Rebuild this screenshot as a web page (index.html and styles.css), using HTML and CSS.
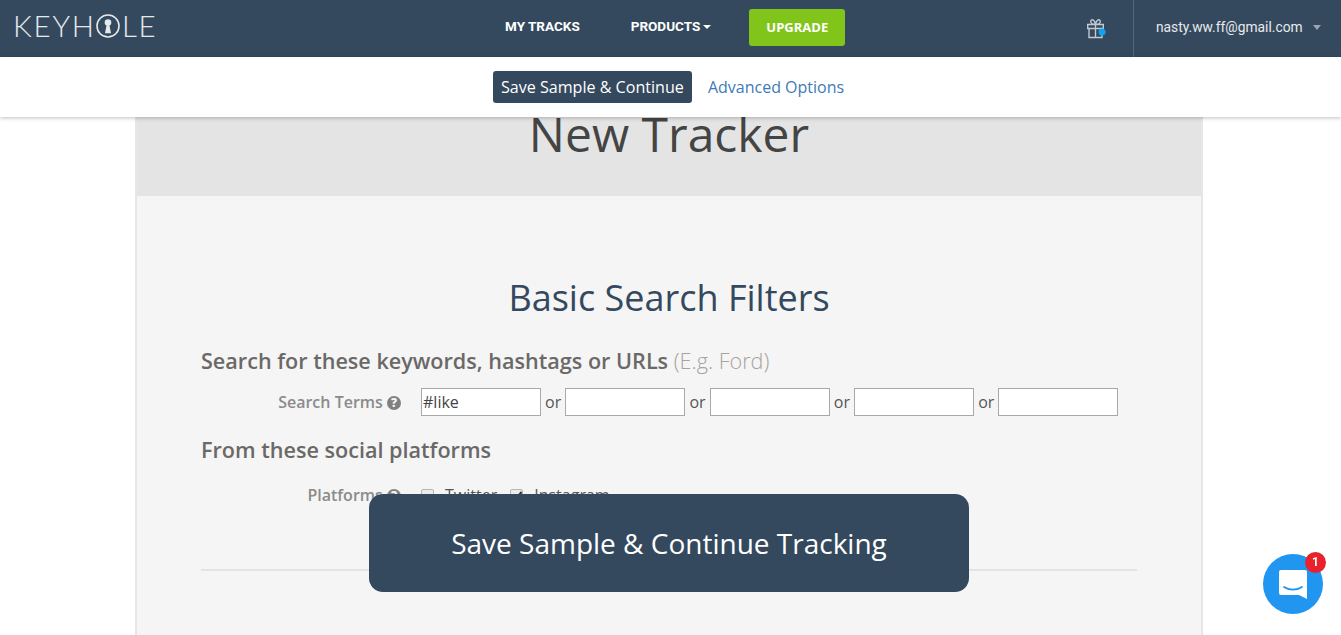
FILE: index.html
```html
<!DOCTYPE html>
<html lang="en">
<head>
  <meta charset="UTF-8">
  <meta name="viewport" content="width=device-width, initial-scale=1.0">
  <title>New Tracker</title>
  <link rel="stylesheet" href="styles.css">
</head>
<body>
  <!-- Top navigation -->
  <header class="topbar">
    <a class="logo" href="#">KEYH<svg class="logo-o" width="24" height="24" viewBox="0 0 24 24"><circle cx="12" cy="12" r="11" fill="none" stroke="#e6e9ec" stroke-width="1.6"/><circle cx="12" cy="8.500" r="3.300" fill="#e6e9ec"/><path d="M10.800 10h2.400l1.800 9.200H9z" fill="#e6e9ec"/></svg>LE</a>
    <nav class="topnav">
      <a class="topnav-link" href="#">MY TRACKS</a>
      <a class="topnav-link" href="#">PRODUCTS<span class="caret"></span></a>
      <a class="upgrade" href="#">UPGRADE</a>
    </nav>
    <div class="gift">
      <svg width="20" height="21" viewBox="0 0 20 21" fill="none" stroke="#c3c9d0" stroke-width="1.400">
        <path d="M1.700 6.500h15.600v4H1.700zM3 10.500h13v9H3zM9.500 6.500v13"/>
        <path d="M9.500 6.500C6 6.500 4.300 5 4.800 3 5.500.8 8.500 1.200 9.500 6.500zM9.500 6.500c3.500 0 5.200-1.500 4.700-3.500C13.500.8 10.500 1.200 9.500 6.500z"/>
        <circle cx="16" cy="14" r="3.500" fill="#0ea5ee" stroke="none"/>
      </svg>
    </div>
    <div class="account">nasty.ww.ff@gmail.com<span class="account-caret"></span></div>
  </header>

  <!-- Action bar under the nav -->
  <div class="actionbar">
    <a class="save-small" href="#">Save Sample &amp; Continue</a>
    <a class="advanced" href="#">Advanced Options</a>
  </div>

  <main class="card">
    <div class="card-head">
      <h1>New Tracker</h1>
    </div>
    <div class="card-body">
      <h2>Basic Search Filters</h2>
      <h3>Search for these keywords, hashtags or URLs <span class="hint">(E.g. Ford)</span></h3>
      <div class="field-row">
        <label class="field-label">Search Terms <span class="help">?</span></label>
        <div class="terms">
          <input type="text" value="#like"><span>or</span>
          <input type="text"><span>or</span>
          <input type="text"><span>or</span>
          <input type="text"><span>or</span>
          <input type="text">
        </div>
      </div>
      <h3 class="platforms-title">From these social platforms</h3>
      <div class="field-row platforms-row">
        <label class="field-label">Platforms <span class="help">?</span></label>
        <div class="platforms">
          <input type="checkbox" id="twitter"><label for="twitter">Twitter</label>
          <input type="checkbox" id="instagram" checked><label for="instagram">Instagram</label>
        </div>
      </div>
      <hr class="divider">
    </div>
  </main>

  <!-- Floating button -->
  <a class="save-big" href="#">Save Sample &amp; Continue Tracking</a>

  <!-- Chat launcher -->
  <div class="chat">
    <svg width="30" height="32" viewBox="0 0 30 32">
      <path d="M3 1h24a2 2 0 0 1 2 2v27l-8-4H3a2 2 0 0 1-2-2V3a2 2 0 0 1 2-2z" fill="#fff"/>
      <path d="M6 18c5 3.500 13 3.500 18 0" fill="none" stroke="#2196f0" stroke-width="1.800" stroke-linecap="round"/>
    </svg>
    <span class="chat-badge">1</span>
  </div>
</body>
</html>
```

FILE: styles.css
```css
html, body {
  margin: 0;
  height: 635px;
  overflow: hidden;
}

body {
  font-family: "Open Sans", sans-serif;
  background-color: #fff;
  color: #6b6967;
}

a {
  text-decoration: none;
}

/* Top navigation */
.topbar {
  display: flex;
  align-items: center;
  height: 57px;
  background-color: #34495e;
  position: relative;
}

.logo {
  display: flex;
  align-items: center;
  margin-left: 13px;
  font-family: "Lato", sans-serif;
  font-weight: 300;
  font-size: 29.500px;
  letter-spacing: 1.800px;
  color: #e6e9ec;
  line-height: 26px;
  margin-top: -6px;
}

.logo-o {
  margin: 0 2px 0 0;
}

.topnav {
  position: absolute;
  left: 505px;
  top: 9px;
  display: flex;
  align-items: center;
}

.topnav-link {
  font-family: "Roboto", sans-serif;
  font-weight: 700;
  font-size: 13.500px;
  color: #fff;
  margin-right: 51px;
  margin-top: -4px;
}

.caret {
  display: inline-block;
  margin-left: 3px;
  vertical-align: 2px;
  border-left: 4.500px solid transparent;
  border-right: 4.500px solid transparent;
  border-top: 4.500px solid #fff;
}

.upgrade {
  display: block;
  width: 96px;
  height: 37px;
  line-height: 37px;
  text-align: center;
  background-color: #82c51a;
  border-radius: 3px;
  color: #fff;
  font-weight: 700;
  font-size: 13px;
  margin-left: -13px;
}

.gift {
  position: absolute;
  left: 1086px;
  top: 18px;
  line-height: 0;
}

.account {
  position: absolute;
  left: 1133px;
  top: 0;
  height: 57px;
  width: 208px;
  box-sizing: border-box;
  border-left: 1px solid #53657a;
  padding-left: 22px;
  line-height: 55px;
  font-family: "Roboto", sans-serif;
  font-size: 13.800px;
  color: #e8eaed;
}

.account-caret {
  display: inline-block;
  margin-left: 10px;
  vertical-align: 2px;
  border-left: 4.500px solid transparent;
  border-right: 4.500px solid transparent;
  border-top: 5px solid #9aa5b1;
}

/* Action bar */
.actionbar {
  position: relative;
  z-index: 2;
  display: flex;
  align-items: center;
  justify-content: center;
  gap: 16px;
  height: 60px;
  background-color: #fff;
  box-shadow: 0 1px 4px rgba(0, 0, 0, 0.25);
  padding-right: 4px;
  box-sizing: border-box;
}

.save-small {
  display: block;
  background-color: #34495e;
  color: #fff;
  font-size: 16.100px;
  line-height: 32px;
  padding: 0 8px;
  border-radius: 3px;
}

.advanced {
  color: #3e7ab8;
  font-size: 16px;
}

/* Card */
.card {
  width: 1064px;
  margin-left: 135px;
  border-left: 2px solid #e6e6e6;
  border-right: 2px solid #e6e6e6;
  height: 518px;
  background-color: #f5f5f5;
}

.card-head {
  height: 79px;
  background-color: #e4e4e4;
  text-align: center;
}

h1 {
  margin: 0;
  font-weight: 400;
  font-size: 48px;
  line-height: 36px;
  color: #444;
  position: relative;
  top: -1px;
}

.card-body {
  padding: 77px 64px 0;
}

h2 {
  margin: 0 0 24px;
  text-align: center;
  font-weight: 400;
  font-size: 36px;
  line-height: 49px;
  color: #34495e;
}

h3 {
  margin: 0;
  font-weight: 600;
  font-size: 21.600px;
  line-height: 29px;
  color: #6b6967;
}

.hint {
  font-weight: 300;
  color: #a8a3a0;
}

.field-row {
  display: flex;
  align-items: center;
  margin-top: 13px;
}

.field-label {
  width: 200px;
  text-align: right;
  font-weight: 600;
  font-size: 16px;
  color: #8b8b8b;
}

.help {
  display: inline-block;
  width: 14px;
  height: 14px;
  border-radius: 50%;
  background-color: #808080;
  color: #f5f5f5;
  font-size: 12px;
  font-weight: 800;
  line-height: 14px;
  text-align: center;
  vertical-align: 1px;
}

.terms {
  display: flex;
  align-items: center;
  gap: 4.100px;
  margin-left: 20px;
  font-size: 16px;
  color: #555;
}

.terms input {
  width: 120px;
  height: 28px;
  box-sizing: border-box;
  border: 1px solid #a9a9a9;
  background-color: #fff;
  padding: 0 1px;
  margin: 0;
  font-family: "Open Sans", sans-serif;
  font-size: 16px;
  color: #444;
}

.platforms-title {
  margin-top: 19px;
}

.platforms-row {
  margin-top: 20px;
}

.platforms {
  display: flex;
  align-items: center;
  margin-left: 20px;
  font-size: 16px;
  color: #555;
}

.platforms input {
  appearance: none;
  box-sizing: border-box;
  width: 13px;
  height: 13px;
  margin: 0 11px 0 0;
  border: 1px solid #b5b5b5;
  border-radius: 2px;
  background-color: #ececec;
  position: relative;
}

.platforms input:checked::after {
  content: "";
  position: absolute;
  left: 4px;
  top: 0;
  width: 3px;
  height: 7px;
  border-right: 2px solid #333;
  border-bottom: 2px solid #333;
  transform: rotate(40deg);
}

.platforms label {
  margin-right: 13px;
}

.divider {
  border: 0;
  border-top: 2px solid #e4e4e4;
  margin: 63px 0 0;
}

/* Floating save button */
.save-big {
  position: fixed;
  left: 369px;
  top: 494px;
  width: 600px;
  height: 98px;
  line-height: 98px;
  text-align: center;
  background-color: #34495e;
  border-radius: 14px;
  color: #fff;
  font-size: 28px;
}

/* Chat launcher */
.chat {
  position: fixed;
  left: 1263px;
  top: 554px;
  width: 60px;
  height: 60px;
  border-radius: 50%;
  background-color: #2196f0;
  display: flex;
  align-items: center;
  justify-content: center;
}

.chat svg {
  margin-top: 2px;
}

.chat-badge {
  position: absolute;
  left: 42px;
  top: -2px;
  width: 21px;
  height: 21px;
  border-radius: 50%;
  background-color: #e8212b;
  color: #fff;
  font-family: "Roboto", sans-serif;
  font-size: 12px;
  font-weight: 700;
  line-height: 21px;
  text-align: center;
}
```
